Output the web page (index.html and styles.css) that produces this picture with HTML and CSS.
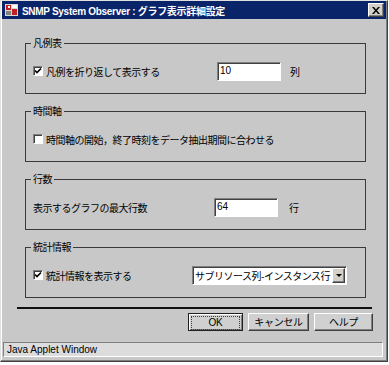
FILE: index.html
```html
<!DOCTYPE html>
<html lang="ja">
<head>
    <meta charset="UTF-8">
    <title>SNMP System Observer : グラフ表示詳細設定</title>
    <link rel="stylesheet" href="styles.css">
</head>
<body>
    <div class="window">
        <!-- Title bar -->
        <div class="titlebar">
            <svg class="app-icon" width="14" height="14" viewBox="0 0 14 14">
                <rect x="0" y="1" width="13" height="12" fill="#d8d8d8"/>
                <rect x="1" y="2" width="5" height="5" fill="#c02020"/>
                <rect x="7" y="2" width="5" height="3" fill="#ffffff"/>
                <rect x="7" y="6" width="5" height="6" fill="#c02020"/>
                <rect x="1" y="8" width="5" height="4" fill="#808080"/>
                <rect x="3" y="3" width="2" height="2" fill="#ffffff"/>
            </svg>
            <span class="title">SNMP System Observer : グラフ表示詳細設定</span>
            <span class="close-btn">
                <svg width="8" height="7" viewBox="0 0 8 7">
                    <path d="M0 0h2l2 2.5 2-2.5h2l-3 3.5 3 3.5h-2l-2-2.5-2 2.5h-2l3-3.5z" fill="#000"/>
                </svg>
            </span>
        </div>

        <div class="content">
            <!-- 凡例表 -->
            <fieldset class="group">
                <legend>凡例表</legend>
                <div class="row">
                    <label class="check label-legend"><span class="box checked"></span>凡例を折り返して表示する</label>
                    <span class="field">10</span>
                    <span class="unit">列</span>
                </div>
            </fieldset>

            <!-- 時間軸 -->
            <fieldset class="group">
                <legend>時間軸</legend>
                <div class="row">
                    <label class="check"><span class="box"></span>時間軸の開始，終了時刻をデータ抽出期間に合わせる</label>
                </div>
            </fieldset>

            <!-- 行数 -->
            <fieldset class="group">
                <legend>行数</legend>
                <div class="row">
                    <span class="label-rows">表示するグラフの最大行数</span>
                    <span class="field">64</span>
                    <span class="unit unit-rows">行</span>
                </div>
            </fieldset>

            <!-- 統計情報 -->
            <fieldset class="group">
                <legend>統計情報</legend>
                <div class="row">
                    <label class="check label-stats"><span class="box checked"></span>統計情報を表示する</label>
                    <span class="combo">
                        <span class="combo-text">サブリソース列-インスタンス行</span>
                        <span class="combo-arrow"></span>
                    </span>
                </div>
            </fieldset>

            <div class="separator"></div>

            <div class="buttons">
                <button class="btn btn-default"><span>OK</span></button>
                <button class="btn btn-cancel">キャンセル</button>
                <button class="btn btn-help">ヘルプ</button>
            </div>
        </div>

        <div class="statusbar">Java Applet Window</div>
    </div>
</body>
</html>
```

FILE: styles.css
```css
body {
    margin: 0;
    background: #ffffff;
    font-family: "Liberation Sans", "Noto Sans CJK JP", sans-serif;
}
.window {
    box-sizing: border-box;
    width: 388px;
    height: 362px;
    background: #c8c8c8;
    border: 1px solid;
    border-color: #e0e0e0 #404040 #404040 #e0e0e0;
    box-shadow: inset -1px -1px 0 #808080, inset 1px 1px 0 #ffffff;
    padding: 0 1px 1px 1px;
    display: flex;
    flex-direction: column;
}
.titlebar {
    height: 18px;
    background: #0a246a;
    display: flex;
    align-items: center;
    padding-left: 3px;
    color: #ffffff;
}
.app-icon {
    display: block;
    margin-right: 3px;
}
.title {
    font-weight: bold;
    font-size: 10px;
    letter-spacing: -0.3px;
    white-space: nowrap;
}
.close-btn {
    margin-left: auto;
    margin-right: 2px;
    box-sizing: border-box;
    width: 16px;
    height: 14px;
    background: #d4d0c8;
    border: 1px solid;
    border-color: #ffffff #404040 #404040 #ffffff;
    box-shadow: inset -1px -1px 0 #808080;
    display: flex;
    align-items: center;
    justify-content: center;
}
.content {
    padding-top: 18px;
    font-family: "Noto Sans CJK JP", sans-serif;
    font-size: 10px;
    letter-spacing: -0.5px;
    color: #000000;
}
.group {
    margin: 0 20px 11px 23px;
    padding: 12px 7px 12px 7px;
    border: 1px solid #3a3a3a;
    min-width: 0;
}
.group legend {
    margin-left: -2px;
    padding: 0 2px;
    font-size: 10px;
    line-height: 12px;
}
.row {
    display: flex;
    align-items: center;
    height: 20px;
}
.check {
    display: flex;
    align-items: center;
    white-space: nowrap;
}
.label-legend {
    width: 184px;
}
.label-rows {
    width: 181px;
}
.label-stats {
    width: 159px;
}
.box {
    box-sizing: border-box;
    width: 10px;
    height: 10px;
    margin-right: 3px;
    background: #ffffff;
    border: 1px solid;
    border-color: #808080 #ffffff #ffffff #808080;
    box-shadow: inset 1px 1px 0 #404040;
}
.box.checked {
    background: #ffffff url("data:image/svg+xml;utf8,<svg xmlns='http://www.w3.org/2000/svg' width='8' height='8' viewBox='0 0 8 8'><path d='M1 3.5l2 2 4-4' stroke='black' stroke-width='1.6' fill='none'/></svg>") no-repeat center;
}
.field {
    box-sizing: border-box;
    width: 64px;
    height: 19px;
    background: #ffffff;
    border: 1px solid;
    border-color: #808080 #ffffff #ffffff #808080;
    box-shadow: inset 1px 1px 0 #404040;
    padding: 1px 0 0 2px;
    font-family: "Liberation Sans", sans-serif;
    font-size: 10px;
    letter-spacing: 0;
    line-height: 13px;
}
.unit {
    margin-left: 9px;
}
.unit-rows {
    margin-left: 11px;
}
.combo {
    box-sizing: border-box;
    width: 155px;
    height: 19px;
    background: #ffffff;
    border: 1px solid;
    border-color: #808080 #ffffff #ffffff #808080;
    box-shadow: inset 1px 1px 0 #404040;
    display: flex;
    align-items: center;
    padding: 1px 1px 1px 2px;
}
.combo-text {
    flex: 1;
    white-space: nowrap;
    overflow: hidden;
}
.combo-arrow {
    box-sizing: border-box;
    width: 13px;
    height: 15px;
    background: #d4d0c8;
    border: 1px solid;
    border-color: #ffffff #404040 #404040 #ffffff;
    box-shadow: inset -1px -1px 0 #808080;
    position: relative;
}
.combo-arrow::after {
    content: "";
    position: absolute;
    left: 3px;
    top: 5px;
    border-left: 3px solid transparent;
    border-right: 3px solid transparent;
    border-top: 3px solid #000000;
}
.separator {
    margin: -2px 14px 0 15px;
    height: 2px;
    background: #101010;
}
.buttons {
    display: flex;
    justify-content: flex-end;
    gap: 5px;
    margin: 4px 13px 0 0;
}
.btn {
    box-sizing: border-box;
    height: 18px;
    padding: 0;
    background: #d0d0d0;
    border: 1px solid;
    border-color: #ffffff #404040 #404040 #ffffff;
    box-shadow: inset -1px -1px 0 #808080;
    font-family: "Noto Sans CJK JP", sans-serif;
    font-size: 10px;
    letter-spacing: -0.3px;
    line-height: 14px;
    color: #000000;
}
.btn-default {
    width: 55px;
    border-color: #202020;
    box-shadow: inset 1px 1px 0 #ffffff, inset -1px -1px 0 #808080;
    font-family: "Liberation Sans", sans-serif;
    padding: 2px;
}
.btn-default span {
    display: block;
    height: 12px;
    line-height: 12px;
    border: 1px dotted #404040;
}
.btn-cancel {
    width: 61px;
}
.btn-help {
    width: 59px;
}
.statusbar {
    margin: auto 3px 3px 1px;
    height: 15px;
    box-sizing: border-box;
    background: #dcdcdc;
    border: 1px solid;
    border-color: #808080 #ffffff #ffffff #808080;
    padding-left: 3px;
    font-size: 10px;
    line-height: 13px;
    color: #000000;
}
```
